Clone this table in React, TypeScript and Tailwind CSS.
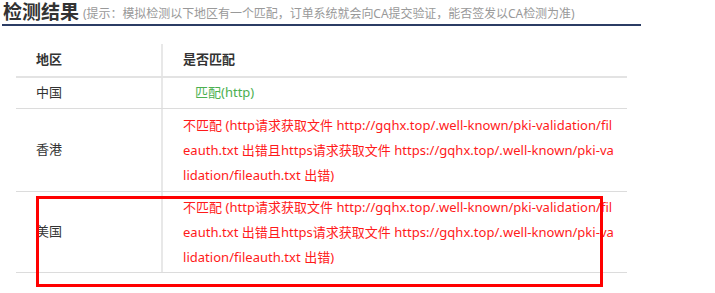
import React from "react";

const FONT = { fontFamily: '"Noto Sans", "Noto Sans CJK SC", sans-serif' };

function Lines({ lines }: { lines: string[] }) {
  return (
    <div className="text-[13px] leading-[25px] text-[#ff1a1a] whitespace-nowrap tracking-[0.03px]">
      {lines.map((l, i) => (
        <div key={i}>{l}</div>
      ))}
    </div>
  );
}

const fail = [
  "不匹配 (http请求获取文件 http://gqhx.top/.well-known/pki-validation/fil",
  "eauth.txt 出错且https请求获取文件 https://gqhx.top/.well-known/pki-va",
  "lidation/fileauth.txt 出错)",
];

export default function App() {
  return (
    <div className="w-[715px] h-[293px] bg-white relative overflow-hidden" style={FONT}>
      <div className="ml-[2px] w-[639px] h-[26px] border-b-2 border-[#2b3c64] flex items-end pb-[2px]">
        <span className="ml-[1px] text-[19px] font-bold text-[#333] leading-[20px]">检测结果</span>
        <span className="ml-[4px] text-[12px] text-[#999] leading-[16px] tracking-[-0.05px]">
          (提示：模拟检测以下地区有一个匹配，订单系统就会向CA提交验证，能否签发以CA检测为准)
        </span>
      </div>
      <div className="ml-[16px] mt-[18px] w-[611px] text-[#333]">
        <div className="flex h-[34px] border-b-2 border-[#e3e3e3]">
          <div className="w-[145px] pl-[20px] flex items-center text-[13px] font-bold">地区</div>
          <div className="w-[2px] bg-[#e8e8e8]" />
          <div className="flex-1 pl-[20px] flex items-center text-[13px] font-bold">是否匹配</div>
        </div>
        <div className="flex h-[31px] border-b border-[#dcdcdc]">
          <div className="w-[145px] pl-[20px] flex items-center text-[13px]">中国</div>
          <div className="w-[2px] bg-[#e8e8e8]" />
          <div className="flex-1 pl-[32px] flex items-center text-[13px] text-[#4cb050]">匹配(http)</div>
        </div>
        <div className="flex h-[83px] border-b border-[#dcdcdc]">
          <div className="w-[145px] pl-[20px] flex items-center text-[13px]">香港</div>
          <div className="w-[2px] bg-[#e8e8e8]" />
          <div className="flex-1 pl-[20px] flex items-center">
            <Lines lines={fail} />
          </div>
        </div>
        <div className="flex h-[81px] border-b border-[#dcdcdc]">
          <div className="w-[145px] pl-[20px] flex items-center text-[13px]">美国</div>
          <div className="w-[2px] bg-[#e8e8e8]" />
          <div className="flex-1 pl-[20px] flex items-center">
            <Lines lines={fail} />
          </div>
        </div>
      </div>
      <div className="absolute left-[36px] top-[196px] w-[567px] h-[91px] border-[3px] border-[#ff0000]" />
    </div>
  );
}
